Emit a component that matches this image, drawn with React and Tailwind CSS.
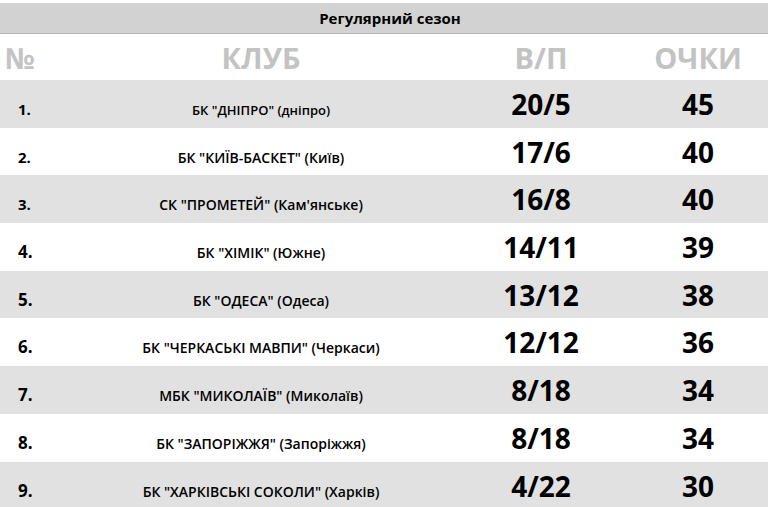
const rows = [
  { n: '1.', club: 'БК "ДНІПРО" (дніпро)', wl: '20/5', pts: '45', size: 'text-[13px]' },
  { n: '2.', club: 'БК "КИЇВ-БАСКЕТ" (Київ)', wl: '17/6', pts: '40', size: 'text-[14px]' },
  { n: '3.', club: 'СК "ПРОМЕТЕЙ" (Кам\'янське)', wl: '16/8', pts: '40', size: 'text-[14px]' },
  { n: '4.', club: 'БК "ХІМІК" (Южне)', wl: '14/11', pts: '39', size: 'text-[14px]' },
  { n: '5.', club: 'БК "ОДЕСА" (Одеса)', wl: '13/12', pts: '38', size: 'text-[14px]' },
  { n: '6.', club: 'БК "ЧЕРКАСЬКІ МАВПИ" (Черкаси)', wl: '12/12', pts: '36', size: 'text-[14px]' },
  { n: '7.', club: 'МБК "МИКОЛАЇВ" (Миколаїв)', wl: '8/18', pts: '34', size: 'text-[14px]' },
  { n: '8.', club: 'БК "ЗАПОРІЖЖЯ" (Запоріжжя)', wl: '8/18', pts: '34', size: 'text-[14px]' },
  { n: '9.', club: 'БК "ХАРКІВСЬКІ СОКОЛИ" (Харків)', wl: '4/22', pts: '30', size: 'text-[14px]' },
];

const cols = 'grid grid-cols-[68px_386px_174px_140px] items-baseline';

export default function App() {
  return (
    <div className="h-[507px] w-[768px] overflow-hidden bg-white pt-[3px] font-['Open_Sans',sans-serif] text-black">
      <div className="flex h-[31px] items-center justify-center border-b border-[#b4b4b4] bg-[#d2d2d2] pl-3 text-[15px] font-bold">
        Регулярний сезон
      </div>
      <div className={`${cols} h-[46px] pt-[6px] text-[29px] leading-[36px] font-bold text-[#c3c3c3]`}>
        <div className="pl-[5px]">№</div>
        <div className="text-center">КЛУБ</div>
        <div className="text-center">В/П</div>
        <div className="text-center">ОЧКИ</div>
      </div>
      {rows.map((r, i) => (
        <div key={r.n} className={`${cols} h-[47.7px] pt-[6px] ${i % 2 === 0 ? 'bg-[#e1e1e1]' : 'bg-white'}`}>
          <div className={`pl-[18px] font-bold ${i < 3 ? 'text-[15px]' : 'text-[17px]'}`}>{r.n}</div>
          <div className={`text-center font-semibold ${r.size}`}>{r.club}</div>
          <div className="text-center text-[28px] leading-[36px] font-bold">{r.wl}</div>
          <div className="text-center text-[28px] leading-[36px] font-bold">{r.pts}</div>
        </div>
      ))}
    </div>
  );
}
